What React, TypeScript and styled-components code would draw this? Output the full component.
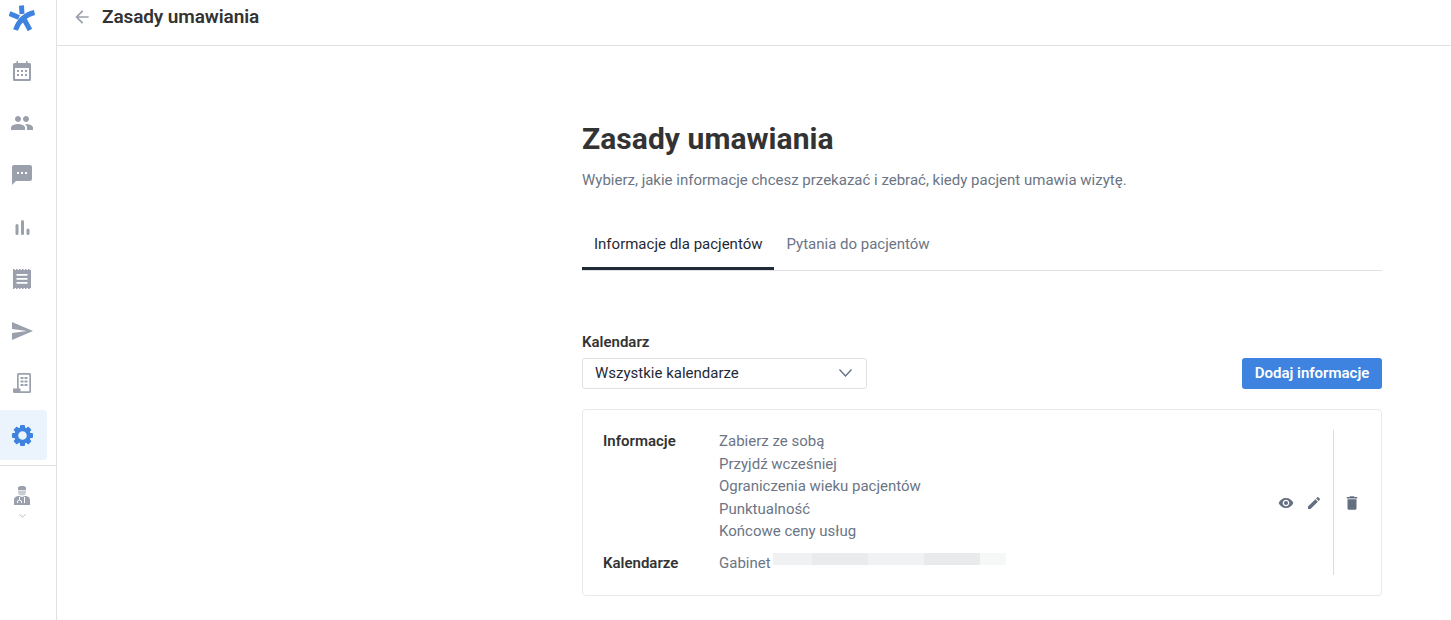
import React from 'react';
import styled, { createGlobalStyle } from 'styled-components';
import { MdArrowBack, MdPeople, MdSms, MdSend, MdVisibility, MdEdit, MdDelete } from 'react-icons/md';

const Global = createGlobalStyle`
  html, body { margin: 0; padding: 0; background: #fff; }
  body { font-family: Roboto, "Liberation Sans", sans-serif; color: #333; }
`;

const Page = styled.div`display: flex; height: 620px; overflow: hidden;`;
const Sidebar = styled.nav`
  width: 57px; box-sizing: border-box; flex: none; border-right: 1px solid #dfe1e5; display: flex; flex-direction: column;
`;
const LogoBox = styled.div`height: 36px; width: 44px; display: flex; align-items: center; justify-content: center;`;
const NavItem = styled.div<{ $active?: boolean }>`
  height: 50px; margin-bottom: 2px; width: 47px; box-sizing: border-box; display: flex; align-items: center; justify-content: center;
  padding-right: 3px; color: ${p => (p.$active ? '#3d83df' : '#9aa1ad')};
  background: ${p => (p.$active ? '#ebf3fd' : 'transparent')};
  border-radius: 0 4px 4px 0;
`;
const NavList = styled.div`display: flex; flex-direction: column; padding-top: 10px;`;
const NavDivider = styled.div`height: 1px; background: #dfe1e5; margin-top: 3px;`;
const DoctorBox = styled.div`
  width: 44px; padding-top: 20px; display: flex; flex-direction: column; align-items: center; gap: 9px; color: #9aa1ad;
`;
const Main = styled.div`flex: 1; min-width: 0;`;
const Header = styled.header`
  height: 46px; box-sizing: border-box; border-bottom: 1px solid #dfe1e5; display: flex; align-items: flex-start; padding: 6px 0 0 15px;
`;
const BackIcon = styled.span`display: flex; color: #9aa1ad; width: 20px; height: 22px; align-items: center; margin-right: 10px;`;
const HeaderTitle = styled.h2`
  margin: 0; font-size: 19px; line-height: 22px; font-weight: 600; color: #333; letter-spacing: -0.1px;
`;
const Content = styled.main`width: 800px; margin-left: 525px; padding-top: 74px;`;
const Title = styled.h1`margin: 0; font-size: 30px; line-height: 38px; font-weight: 700; color: #333; letter-spacing: 0.05px;`;
const Subtitle = styled.p`margin: 12px 0 0; font-size: 15px; line-height: 20px; color: #6b7585;`;
const Tabs = styled.div`display: flex; margin-top: 33px; border-bottom: 1px solid #dfe1e5;`;
const Tab = styled.div<{ $active?: boolean }>`
  padding: 0 12px; height: 47px; line-height: 42px; font-size: 15px;
  color: ${p => (p.$active ? '#1f2a37' : '#6b7585')};
  border-bottom: 3px solid ${p => (p.$active ? '#1f2a37' : 'transparent')};
  box-sizing: border-box;
`;
const Label = styled.div`margin-top: 61px; font-size: 15px; line-height: 20px; font-weight: 600; color: #333;`;
const Toolbar = styled.div`display: flex; justify-content: space-between; margin-top: 6px;`;
const Select = styled.div`
  width: 285px; height: 31px; box-sizing: border-box; border: 1px solid #dfe1e5; border-radius: 3px;
  padding: 0 14px 1px 12px; display: flex; align-items: center; justify-content: space-between;
  font-size: 15px; color: #1f2a37;
`;
const AddButton = styled.button`
  width: 140px; height: 31px; border: 0; border-radius: 3px; background: #3d83df; color: #fff;
  font: 600 15px Roboto, sans-serif; padding: 0 0 1px;
`;
const Card = styled.section`
  margin-top: 20px; height: 187px; box-sizing: border-box; border: 1px solid #e8e9eb; border-radius: 4px;
  padding: 20px; display: flex;
`;
const Details = styled.div`flex: 1; display: flex; flex-direction: column; gap: 9px;`;
const Row = styled.div`display: grid; grid-template-columns: 116px 1fr;`;
const RowTitle = styled.div`font-size: 15px; line-height: 22.5px; font-weight: 600; color: #333;`;
const Values = styled.div`display: flex; flex-direction: column; font-size: 15px; line-height: 22.5px; color: #6b7585;`;
const CalValue = styled.div`display: flex; font-size: 15px; line-height: 22.5px; color: #6b7585;`;
const Blur = styled.div`display: flex; height: 12px; margin: 1px 0 0 2px;`;
const BlurPart = styled.span<{ $w: number; $c: string }>`width: ${p => p.$w}px; background: ${p => p.$c};`;
const Actions = styled.div`display: flex; align-items: center; gap: 8px; color: #646f80; padding-right: 9px;`;
const ActionBtn = styled.span`display: flex; width: 20px; height: 20px; align-items: center; justify-content: center;`;
const DeleteArea = styled.div`
  width: 48px; border-left: 1px solid #d9dbdf; display: flex; align-items: center; color: #646f80; padding-left: 9px; box-sizing: border-box; margin-right: -20px;
`;

const CalendarIcon = () => (
  <svg width="18" height="20" viewBox="0 0 18 20" fill="currentColor">
    <path fillRule="evenodd" d="M3.500 0h1.500v2h8V0h1.500v2h2A1.500 1.500 0 0 1 18 3.500v15a1.500 1.500 0 0 1-1.500 1.500h-15A1.500 1.500 0 0 1 0 18.500v-15A1.500 1.500 0 0 1 1.500 2h2V0zM2 7v11h14V7H2z" />
    <path d="M4 9h2v2H4zM8 9h2v2H8zM12 9h2v2h-2zM4 13h2v2H4zM8 13h2v2H8zM12 13h2v2h-2z" />
  </svg>
);
const BarsIcon = () => (
  <svg width="15" height="15" viewBox="0 0 15 15" fill="currentColor">
    <rect x="0.500" y="4" width="3" height="11" rx="1.500" />
    <rect x="6" y="0" width="3" height="15" rx="1.500" />
    <rect x="11.500" y="8.500" width="3" height="6.500" rx="1.500" />
  </svg>
);
const ReceiptIcon = () => (
  <svg width="18" height="20" viewBox="0 0 18 20" fill="currentColor">
    <path d="M0 0h1.500v1H3V0h1.500v1H6V0h1.500v1H9V0h1.500v1H12V0h1.500v1H15V0h1.500v1H18v18h-1.500v1H15v-1h-1.500v1H12v-1h-1.500v1H9v-1H7.500v1H6v-1H4.500v1H3v-1H1.500v1H0z" />
    <path fill="#fff" d="M3.500 5h11v1.800h-11zM3.500 9h11v1.800h-11zM3.500 13h11v1.800h-11z" />
  </svg>
);
const LedgerIcon = () => (
  <svg width="18" height="20" viewBox="0 0 18 20" fill="currentColor">
    <path fillRule="evenodd" d="M5.500 0H16.500A1.500 1.500 0 0 1 18 1.500V18.500A1.500 1.500 0 0 1 16.500 20H1.500A1.500 1.500 0 0 1 0 18.500V15.500H4V1.500A1.500 1.500 0 0 1 5.500 0zM5.700 1.700V15.500H7.500V18.300H16.300V1.700z" />
    <path d="M7.500 4h3v2h-3zM11.500 4h3v2h-3zM7.500 7.500h3v2h-3zM11.500 7.500h3v2h-3zM7.500 11h3v2h-3zM11.500 11h3v2h-3z" />
  </svg>
);
const DoctorIcon = () => (
  <svg width="16" height="19" viewBox="0 0 16 19" fill="currentColor">
    <path d="M4 1.500C4 .5 6 0 8 0s4 .5 4 1.500V4H4z" />
    <path opacity=".55" d="M4 4.500h8V6a4 3.500 0 0 1-8 0z" />
    <path d="M0 14c0-2.800 2.500-3.800 5-4l3 1 3-1c2.500.2 5 1.200 5 4v5H0z" />
    <path d="M5.500 11v3M10.500 11v3M3.500 17v-2l2-1 2 1v2M10.500 14v3" fill="none" stroke="#fff" strokeWidth="1" />
  </svg>
);
const Gear = () => (
  <svg width="21" height="21" viewBox="0 0 21 21" fill="currentColor">
    {[0, 45, 90, 135, 180, 225, 270, 315].map(a => (
      <rect key={a} x="8" y="0" width="5" height="5" rx="1" transform={`rotate(${a} 10.500 10.500)`} />
    ))}
    <circle cx="10.500" cy="10.500" r="6.300" fill="none" stroke="currentColor" strokeWidth="4" />
  </svg>
);
const Logo = () => (
  <svg width="26" height="26" viewBox="0 0 26 26" fill="none" stroke="#3d83df" strokeWidth="5" strokeLinecap="butt">
    <path d="M12.500 0.500 L13 9" />
    <path d="M0.500 8.500 L10 12.500" />
    <path d="M25.500 7.500 C17 9.500 10 15 6.500 25" />
    <path d="M15.500 15 L21 25" />
  </svg>
);
const Chevron = ({ w, h, color, sw }: { w: number; h: number; color: string; sw: number }) => (
  <svg width={w} height={h} viewBox={`0 0 ${w} ${h}`} fill="none" stroke={color} strokeWidth={sw}>
    <path d={`M0.500 0.500 L${w / 2} ${h - 1} L${w - 0.5} 0.500`} />
  </svg>
);

const navIcons = [
  <CalendarIcon />,
  <MdPeople size={24} />,
  <MdSms size={24} />,
  <BarsIcon />,
  <ReceiptIcon />,
  <MdSend size={24} />,
  <LedgerIcon />,
];

const infos = ['Zabierz ze sobą', 'Przyjdź wcześniej', 'Ograniczenia wieku pacjentów', 'Punktualność', 'Końcowe ceny usług'];
const blur: [number, string][] = [[39, '#f0f1f3'], [56, '#e9ebec'], [56, '#f1f2f4'], [56, '#e8eaec'], [26, '#f6f7f7']];

export default function App() {
  return (
    <Page>
      <Global />
      <Sidebar>
        <LogoBox><Logo /></LogoBox>
        <NavList>
          {navIcons.map((icon, i) => <NavItem key={i}>{icon}</NavItem>)}
          <NavItem $active><Gear /></NavItem>
        </NavList>
        <NavDivider />
        <DoctorBox>
          <DoctorIcon />
          <Chevron w={7} h={4} color="#b4b9c2" sw={1} />
        </DoctorBox>
      </Sidebar>
      <Main>
        <Header>
          <BackIcon><MdArrowBack size={20} /></BackIcon>
          <HeaderTitle>Zasady umawiania</HeaderTitle>
        </Header>
        <Content>
          <Title>Zasady umawiania</Title>
          <Subtitle>Wybierz, jakie informacje chcesz przekazać i zebrać, kiedy pacjent umawia wizytę.</Subtitle>
          <Tabs>
            <Tab $active>Informacje dla pacjentów</Tab>
            <Tab>Pytania do pacjentów</Tab>
          </Tabs>
          <Label>Kalendarz</Label>
          <Toolbar>
            <Select>
              Wszystkie kalendarze
              <Chevron w={13} h={8} color="#646f80" sw={1.3} />
            </Select>
            <AddButton>Dodaj informacje</AddButton>
          </Toolbar>
          <Card>
            <Details>
              <Row>
                <RowTitle>Informacje</RowTitle>
                <Values>{infos.map(t => <div key={t}>{t}</div>)}</Values>
              </Row>
              <Row>
                <RowTitle>Kalendarze</RowTitle>
                <CalValue>
                  Gabinet
                  <Blur>{blur.map(([w, c], i) => <BlurPart key={i} $w={w} $c={c} />)}</Blur>
                </CalValue>
              </Row>
            </Details>
            <Actions>
              <ActionBtn><MdVisibility size={16} /></ActionBtn>
              <ActionBtn><MdEdit size={16} /></ActionBtn>
            </Actions>
            <DeleteArea><MdDelete size={18} /></DeleteArea>
          </Card>
        </Content>
      </Main>
    </Page>
  );
}
